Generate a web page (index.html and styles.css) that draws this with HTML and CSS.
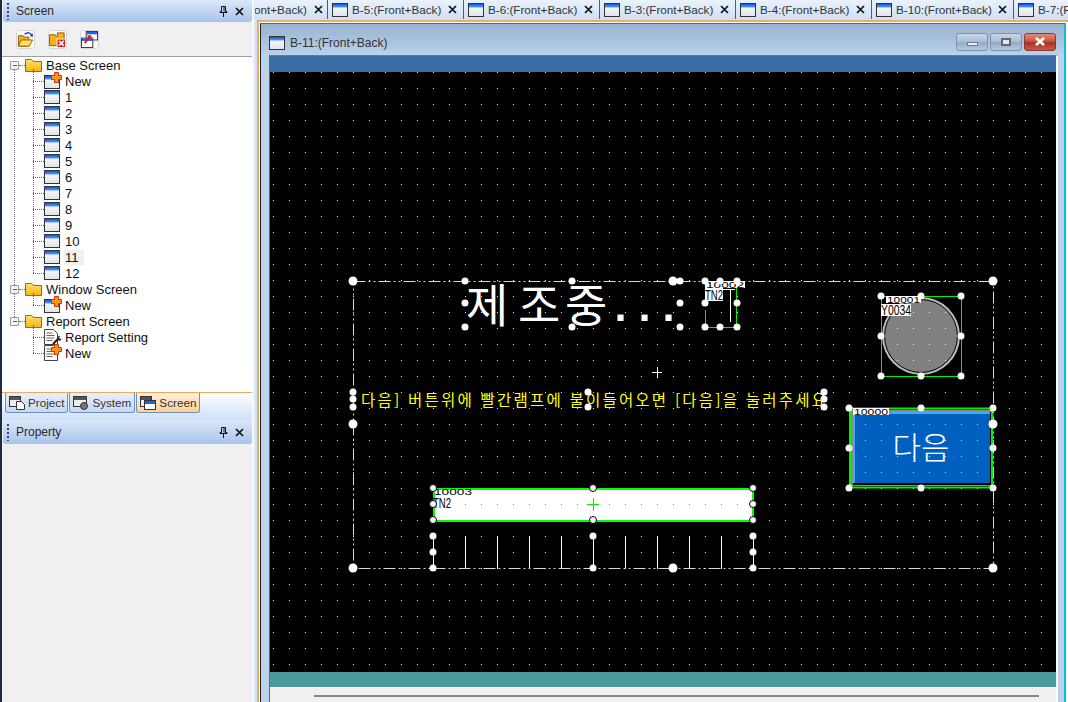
FILE: index.html
```html
<!DOCTYPE html>
<html lang="ko">
<head>
<meta charset="utf-8">
<title>B-11:(Front+Back)</title>
<link rel="stylesheet" href="styles.css">
</head>
<body>
<svg class="defs" width="0" height="0">
  <defs>
    <linearGradient id="gWinTop" x1="0" y1="0" x2="0" y2="1"><stop offset="0" stop-color="#0a5ae0"/><stop offset="1" stop-color="#5aa0f8"/></linearGradient>
    <linearGradient id="gWinBody" x1="0" y1="0" x2="0" y2="1"><stop offset="0" stop-color="#ffffff"/><stop offset="1" stop-color="#dfe3ea"/></linearGradient>
    <linearGradient id="gFolder" x1="0" y1="0" x2="0" y2="1"><stop offset="0" stop-color="#ffe070"/><stop offset="1" stop-color="#f7b40f"/></linearGradient>
    <symbol id="win" viewBox="0 0 16 14">
      <rect x=".5" y=".5" width="15" height="13" fill="url(#gWinBody)" stroke="#333"/>
      <rect x="1" y="1" width="14" height="3.5" fill="url(#gWinTop)"/>
    </symbol>
    <symbol id="folder" viewBox="0 0 17 14">
      <path d="M.5 13.5V1.5h6l2 2h8v10z" fill="url(#gFolder)" stroke="#9a6a08"/>
    </symbol>
    <symbol id="plus" viewBox="0 0 11 11">
      <path d="M3.5.5h4v3h3v4h-3v3h-4v-3h-3v-4h3z" fill="#f7931e" stroke="#c43c00"/>
    </symbol>
    <symbol id="doc" viewBox="0 0 14 16">
      <path d="M.5.5h9l4 4v11H.5z" fill="#fff" stroke="#444"/>
      <path d="M2.5 4h6M2.5 6.500h8M2.500 9h8M2.500 11.500h6" stroke="#666" fill="none"/>
    </symbol>
  </defs>
</svg>

<aside class="sidebar">
  <header class="panel-head">
    <span class="grip"></span>
    <span class="panel-title">Screen</span>
    <svg class="pin" viewBox="0 0 9 11"><path d="M2.500.5h4v5h1.500v1H1v-1h1.500zM4.500 7v4" fill="none" stroke="#111"/><path d="M5 1v4.500" stroke="#111"/></svg>
    <svg class="close" viewBox="0 0 9 9"><path d="M1 1l7 7M8 1L1 8" stroke="#111" stroke-width="1.700" fill="none"/></svg>
  </header>

  <div class="toolbar">
    <button class="tool">
      <svg viewBox="0 0 18 18"><path d="M1.500 16V5h5l1 1.500h5V16z" fill="#f2b01e" stroke="#8a5c00"/><path d="M1.500 16l3-6.500h12L13 16z" fill="#ffdf60" stroke="#8a5c00"/><path d="M8 3.500c3-2.500 6-2 7.500 1" fill="none" stroke="#1d3fb8" stroke-width="1.500"/><path d="M13.500 5.500l3.500.5-.5-3.500z" fill="#1d3fb8"/></svg>
    </button>
    <button class="tool">
      <svg viewBox="0 0 18 18"><path d="M.5 15.500V4h6l1 1.500h1.500V2h7v13.500z" fill="#f2b01e" stroke="#8a5c00"/><rect x="8.500" y="8.500" width="9" height="9" fill="#e01818" stroke="#fff"/><path d="M10.500 10.500l5 5M15.500 10.500l-5 5" stroke="#fff" stroke-width="1.800"/></svg>
    </button>
    <button class="tool">
      <svg viewBox="0 0 18 18"><rect x="5.500" y=".5" width="12" height="9" fill="#fff" stroke="#333"/><rect x="6" y="1" width="11" height="2.500" fill="#1a66e0"/><rect x=".5" y="7.500" width="12" height="10" fill="#fff" stroke="#333"/><rect x="1" y="8" width="11" height="2.500" fill="#1a66e0"/><path d="M4 13l5-7" stroke="#e01818" stroke-width="2"/><path d="M6 4.500h5v4.500z" fill="#e01818"/></svg>
    </button>
  </div>

  <nav class="tree">
    <div class="branch root-a">
      <div class="row root"><span class="box"></span><span class="dots short"></span><svg class="ico-folder"><use href="#folder"/></svg><span>Base Screen</span></div>
      <div class="kids">
        <div class="row"><span class="dots"></span><span class="stack"><svg class="ico"><use href="#win"/></svg><svg class="ico-plus"><use href="#plus"/></svg></span><span>New</span></div>
        <div class="row"><span class="dots"></span><svg class="ico"><use href="#win"/></svg><span>1</span></div>
        <div class="row"><span class="dots"></span><svg class="ico"><use href="#win"/></svg><span>2</span></div>
        <div class="row"><span class="dots"></span><svg class="ico"><use href="#win"/></svg><span>3</span></div>
        <div class="row"><span class="dots"></span><svg class="ico"><use href="#win"/></svg><span>4</span></div>
        <div class="row"><span class="dots"></span><svg class="ico"><use href="#win"/></svg><span>5</span></div>
        <div class="row"><span class="dots"></span><svg class="ico"><use href="#win"/></svg><span>6</span></div>
        <div class="row"><span class="dots"></span><svg class="ico"><use href="#win"/></svg><span>7</span></div>
        <div class="row"><span class="dots"></span><svg class="ico"><use href="#win"/></svg><span>8</span></div>
        <div class="row"><span class="dots"></span><svg class="ico"><use href="#win"/></svg><span>9</span></div>
        <div class="row"><span class="dots"></span><svg class="ico"><use href="#win"/></svg><span>10</span></div>
        <div class="row"><span class="dots"></span><svg class="ico"><use href="#win"/></svg><span class="hover">11</span></div>
        <div class="row"><span class="dots"></span><svg class="ico"><use href="#win"/></svg><span>12</span></div>
      </div>
    </div>
    <div class="branch root-a">
      <div class="row root"><span class="box"></span><span class="dots short"></span><svg class="ico-folder"><use href="#folder"/></svg><span>Window Screen</span></div>
      <div class="kids">
        <div class="row"><span class="dots"></span><span class="stack"><svg class="ico"><use href="#win"/></svg><svg class="ico-plus"><use href="#plus"/></svg></span><span>New</span></div>
      </div>
    </div>
    <div class="branch">
      <div class="row root"><span class="box"></span><span class="dots short"></span><svg class="ico-folder"><use href="#folder"/></svg><span>Report Screen</span></div>
      <div class="kids">
        <div class="row"><span class="dots"></span><span class="stack"><svg class="ico-doc"><use href="#doc"/></svg><svg class="ico-wrench" viewBox="0 0 10 10"><path d="M1 9l5-5" stroke="#222" stroke-width="2.200"/><path d="M5.500 4.500c-1-2 .5-3.500 3-3.500L7 2.500 8 4l1.500-.5c0 2-2 3.200-4 1z" fill="#222"/></svg></span><span>Report Setting</span></div>
        <div class="row"><span class="dots"></span><span class="stack"><svg class="ico-doc"><use href="#doc"/></svg><svg class="ico-plus"><use href="#plus"/></svg></span><span>New</span></div>
      </div>
    </div>
  </nav>

  <div class="side-tabs">
    <span class="side-tab"><svg class="tab-ico" viewBox="0 0 16 14"><rect x=".5" y=".5" width="11" height="10" fill="#eee" stroke="#333"/><rect x="1" y="1" width="10" height="3" fill="#555"/><path d="M7.500 5.500h5l3 3v5h-8z" fill="#fff" stroke="#333"/></svg>Project</span>
    <span class="side-tab"><svg class="tab-ico" viewBox="0 0 16 14"><rect x=".5" y=".5" width="13" height="10" fill="#eee" stroke="#333"/><rect x="1" y="1" width="12" height="3" fill="#555"/><circle cx="11" cy="10" r="3.500" fill="#777" stroke="#333"/></svg>System</span>
    <span class="side-tab active"><svg class="tab-ico" viewBox="0 0 16 14"><rect x=".5" y=".5" width="11" height="10" fill="#eee" stroke="#333"/><rect x="1" y="1" width="10" height="3" fill="#555"/><rect x="4.500" y="4.500" width="11" height="9" fill="#fff" stroke="#333"/><rect x="5" y="5" width="10" height="3" fill="#1a66e0"/></svg>Screen</span>
  </div>

  <header class="panel-head property">
    <span class="grip"></span>
    <span class="panel-title">Property</span>
    <svg class="pin" viewBox="0 0 9 11"><path d="M2.500.5h4v5h1.500v1H1v-1h1.500zM4.500 7v4" fill="none" stroke="#111"/><path d="M5 1v4.500" stroke="#111"/></svg>
    <svg class="close" viewBox="0 0 9 9"><path d="M1 1l7 7M8 1L1 8" stroke="#111" stroke-width="1.700" fill="none"/></svg>
  </header>
  <div class="property-body"></div>
</aside>

<main class="main">
  <div class="tabstrip">
    <div class="tab clipped"><span class="tab-label">ont+Back)</span><svg class="tab-x" viewBox="0 0 9 9"><path d="M1 1l7 7M8 1L1 8" stroke="#111" stroke-width="1.700"/></svg></div>
    <div class="tab"><svg class="ico"><use href="#win"/></svg><span class="tab-label">B-5:(Front+Back)</span><svg class="tab-x" viewBox="0 0 9 9"><path d="M1 1l7 7M8 1L1 8" stroke="#111" stroke-width="1.700"/></svg></div>
    <div class="tab"><svg class="ico"><use href="#win"/></svg><span class="tab-label">B-6:(Front+Back)</span><svg class="tab-x" viewBox="0 0 9 9"><path d="M1 1l7 7M8 1L1 8" stroke="#111" stroke-width="1.700"/></svg></div>
    <div class="tab"><svg class="ico"><use href="#win"/></svg><span class="tab-label">B-3:(Front+Back)</span><svg class="tab-x" viewBox="0 0 9 9"><path d="M1 1l7 7M8 1L1 8" stroke="#111" stroke-width="1.700"/></svg></div>
    <div class="tab"><svg class="ico"><use href="#win"/></svg><span class="tab-label">B-4:(Front+Back)</span><svg class="tab-x" viewBox="0 0 9 9"><path d="M1 1l7 7M8 1L1 8" stroke="#111" stroke-width="1.700"/></svg></div>
    <div class="tab wide"><svg class="ico"><use href="#win"/></svg><span class="tab-label">B-10:(Front+Back)</span><svg class="tab-x" viewBox="0 0 9 9"><path d="M1 1l7 7M8 1L1 8" stroke="#111" stroke-width="1.700"/></svg></div>
    <div class="tab"><svg class="ico"><use href="#win"/></svg><span class="tab-label">B-7:(Front+Back)</span></div>
  </div>

  <div class="workspace">
    <section class="window">
      <div class="titlebar">
        <svg class="ico"><use href="#win"/></svg>
        <span class="win-title">B-11:(Front+Back)</span>
        <div class="win-buttons">
          <span class="win-btn"><i class="glyph-min"></i></span>
          <span class="win-btn"><i class="glyph-max"></i></span>
          <span class="win-btn red"><svg viewBox="0 0 12 9"><path d="M2 1l8 7M10 1L2 8" stroke="#fff" stroke-width="2.600"/></svg></span>
        </div>
      </div>
      <div class="document">
        <div class="screen-top"></div>
        <svg class="canvas" viewBox="270 72 786 600" width="786" height="600">
          <defs>
            <pattern id="gridW" patternUnits="userSpaceOnUse" x="1" y="8" width="16" height="16"><rect width="1" height="1" fill="#e8e8e8"/></pattern>
            <pattern id="gridG" patternUnits="userSpaceOnUse" x="1" y="8" width="16" height="16"><rect width="1" height="1" fill="#999"/></pattern>
            <clipPath id="lampClip"><circle cx="921" cy="336" r="36"/></clipPath>
          </defs>
          <rect x="270" y="72" width="786" height="600" fill="#000"/>
          <rect x="270" y="71" width="786" height="601" fill="url(#gridW)"/>

          <!-- frame -->
          <rect class="dash" x="353.500" y="281.500" width="640" height="287"/>

          <!-- title -->
          <text class="title-ko" y="322"><tspan x="466 518 565">제조중</tspan><tspan class="title-dots" x="614 638 662" y="321">...</tspan></text>

          <!-- small numeric display -->
          <path class="green thin" d="M736.500 288V327.500H705.500V310"/>
          <rect class="label-bg" x="705" y="281" width="40" height="7"/>
          <text class="tiny" x="706" y="288" textLength="38" lengthAdjust="spacingAndGlyphs">10002</text>
          <rect class="label-bg" x="705" y="288" width="18" height="13"/>
          <text class="tall" x="705" y="300" textLength="18" lengthAdjust="spacingAndGlyphs">TN2</text>
          <path class="white-line" d="M722 289.500H735M730.500 289V322"/>

          <!-- lamp -->
          <rect class="green thin" x="881.500" y="296.500" width="80" height="80"/>
          <circle cx="921" cy="336" r="39" fill="#bbb"/>
          <circle cx="921" cy="336" r="36.500" fill="#808080" stroke="#000"/>
          <rect x="885" y="300" width="72" height="72" fill="url(#gridW)" clip-path="url(#lampClip)"/>
          <rect class="label-bg" x="886" y="296" width="35" height="7"/>
          <text class="tiny" x="887" y="303" textLength="33" lengthAdjust="spacingAndGlyphs">10001</text>
          <rect class="label-bg" x="881" y="304" width="30" height="12"/>
          <text class="tall" x="881" y="315" textLength="30" lengthAdjust="spacingAndGlyphs">Y0034</text>

          <!-- yellow message -->
          <text class="message" x="361" y="406" textLength="465" lengthAdjust="spacing">다음] 버튼위에 빨간램프에 불이들어오면 [다음]을 눌러주세요</text>

          <!-- next button -->
          <rect class="green" x="850" y="408.500" width="142" height="79"/>
          <rect x="851" y="410" width="140" height="76" fill="#8a8a8a"/>
          <rect x="853" y="412" width="138" height="73" fill="#000"/>
          <rect x="853" y="412" width="137" height="71" fill="#46a8f0"/>
          <rect x="855" y="414" width="135" height="69" fill="#0060c0"/>
          <rect x="855" y="414" width="135" height="69" fill="url(#gridW)"/>
          <text class="btn-ko" x="921" y="459">다음</text>
          <rect class="label-bg" x="853" y="408" width="36" height="7"/>
          <text class="tiny" x="854" y="415" textLength="34" lengthAdjust="spacingAndGlyphs">10000</text>

          <!-- slider bar -->
          <rect x="434" y="489" width="319" height="32" fill="#fff" stroke="#0f0" stroke-width="2"/>
          <rect x="435" y="490" width="317" height="30" fill="url(#gridG)"/>
          <text class="tiny" x="434" y="495" textLength="38" lengthAdjust="spacingAndGlyphs">10003</text>
          <text class="tall" x="433" y="508" textLength="18" lengthAdjust="spacingAndGlyphs">TN2</text>
          <path class="green thin" d="M587 504.500H599M593.500 498V511"/>

          <!-- scale -->
          <path class="white-line" d="M433.500 536V568M465.500 536V568M497.500 536V568M529.500 536V568M561.500 536V568M593.500 536V568M625.500 536V568M657.500 536V568M689.500 536V568M721.500 536V568M753.500 536V568"/>

          <!-- crosshair -->
          <path class="white-line" d="M652 372.500H662M657.500 367V378"/>

          <!-- handles -->
          <g class="handles">
            <circle cx="465" cy="281" r="3.500"/><circle cx="572" cy="281" r="3.500"/><circle cx="680" cy="281" r="3.500"/>
            <circle cx="465" cy="303" r="3.500"/><circle cx="680" cy="303" r="3.500"/>
            <circle cx="465" cy="327" r="3.500"/><circle cx="572" cy="327" r="3.500"/><circle cx="680" cy="327" r="3.500"/>
            <circle cx="705" cy="281" r="3.500"/><circle cx="720" cy="281" r="3.500"/><circle cx="737" cy="281" r="3.500"/>
            <circle cx="705" cy="303" r="3.500"/><circle cx="737" cy="303" r="3.500"/>
            <circle cx="705" cy="327" r="3.500"/><circle cx="720" cy="327" r="3.500"/><circle cx="737" cy="327" r="3.500"/>
            <circle cx="881" cy="296" r="3.500"/><circle cx="921" cy="296" r="3.500"/><circle cx="961" cy="296" r="3.500"/>
            <circle cx="881" cy="336" r="3.500"/><circle cx="961" cy="336" r="3.500"/>
            <circle cx="881" cy="376" r="3.500"/><circle cx="921" cy="376" r="3.500"/><circle cx="961" cy="376" r="3.500"/>
            <circle cx="353" cy="392" r="3.500"/><circle cx="353" cy="399" r="3.500"/><circle cx="353" cy="407" r="3.500"/>
            <circle cx="588" cy="392" r="3.500"/><circle cx="588" cy="407" r="3.500"/>
            <circle cx="824" cy="392" r="3.500"/><circle cx="824" cy="399" r="3.500"/><circle cx="824" cy="407" r="3.500"/>
            <circle cx="849" cy="408" r="3.500"/><circle cx="921" cy="408" r="3.500"/><circle cx="993" cy="408" r="3.500"/>
            <circle cx="849" cy="448" r="3.500"/><circle cx="993" cy="448" r="3.500"/>
            <circle cx="849" cy="488" r="3.500"/><circle cx="921" cy="488" r="3.500"/><circle cx="993" cy="488" r="3.500"/>
            <circle cx="433" cy="536" r="3.500"/><circle cx="593" cy="536" r="3.500"/><circle cx="753" cy="536" r="3.500"/>
            <circle cx="433" cy="552" r="3.500"/><circle cx="753" cy="552" r="3.500"/>
            <circle cx="433" cy="568" r="3.500"/><circle cx="593" cy="568" r="3.500"/><circle cx="753" cy="568" r="3.500"/>
          </g>
          <g class="handles ringed">
            <circle cx="433" cy="488" r="3.500"/><circle cx="593" cy="488" r="3.500"/><circle cx="753" cy="488" r="3.500"/>
            <circle cx="433" cy="504" r="3.500"/><circle cx="753" cy="504" r="3.500"/>
            <circle cx="433" cy="520" r="3.500"/><circle cx="593" cy="520" r="3.500"/><circle cx="753" cy="520" r="3.500"/>
          </g>
          <g class="handles">
            <circle cx="353" cy="281" r="4.500"/><circle cx="673" cy="281" r="4.500"/><circle cx="993" cy="281" r="4.500"/>
            <circle cx="353" cy="424" r="4.500"/><circle cx="993" cy="424" r="4.500"/>
            <circle cx="353" cy="568" r="4.500"/><circle cx="673" cy="568" r="4.500"/><circle cx="993" cy="568" r="4.500"/>
          </g>
        </svg>
        <div class="screen-bottom"></div>
        <div class="hscroll"><span class="hscroll-thumb"></span></div>
      </div>
    </section>
  </div>
</main>
</body>
</html>
```

FILE: styles.css
```css
* { box-sizing: border-box; }
html, body { margin: 0; padding: 0; }
body {
  width: 1068px;
  height: 702px;
  overflow: hidden;
  display: flex;
  background: #f0f0f0;
  font-family: "Liberation Sans", Arial, sans-serif;
  color: #222;
}
.defs { position: absolute; }

/* sidebar */
.sidebar {
  width: 252px;
  flex: none;
  display: flex;
  flex-direction: column;
  background: #f0f0f0;
  border-left: 2px solid #1c2a44;
}
.panel-head {
  height: 22px;
  flex: none;
  display: flex;
  align-items: center;
  margin: 0 0 0 1px;
  padding: 0 8px 0 4px;
  border-radius: 0 0 3px 3px;
  background: linear-gradient(#dbe8f9, #a8c4ec);
  font-size: 12px;
}
.grip {
  width: 2px;
  height: 17px;
  margin-right: 7px;
  background: repeating-linear-gradient(#26449a 0 2px, transparent 2px 4px);
}
.panel-title { flex: 1; color: #2a2a2a; }
.pin { width: 9px; height: 11px; margin-right: 7px; }
.close { width: 9px; height: 9px; }

.toolbar {
  height: 34px;
  flex: none;
  display: flex;
  align-items: center;
  gap: 13px;
  padding-left: 14px;
  background: #f0f0f0;
}
.tool {
  width: 19px;
  height: 19px;
  padding: 0;
  border: 1px solid #d6d6d6;
  border-radius: 3px;
  background: #fafafa;
  display: flex;
  align-items: center;
  justify-content: center;
}
.tool svg { width: 17px; height: 17px; }

.tree {
  height: 336px;
  flex: none;
  background: #fff;
  border-top: 1px solid #a0a0a0;
  padding-top: 0;
  font-size: 13px;
  color: #111;
}
.branch { position: relative; }
.branch.root-a::before {
  content: "";
  position: absolute;
  left: 12px;
  top: 12px;
  bottom: -8px;
  border-left: 1px dotted #666;
}
.row {
  height: 16px;
  display: flex;
  align-items: center;
  white-space: nowrap;
  position: relative;
}
.root { padding-left: 8px; }
.kids { margin-left: 31px; position: relative; }
.kids::before {
  content: "";
  position: absolute;
  left: 0;
  top: -4px;
  bottom: 8px;
  border-left: 1px dotted #666;
}
.box {
  width: 9px;
  height: 9px;
  flex: none;
  border: 1px solid #999;
  border-radius: 1px;
  background: linear-gradient(90deg, transparent 2px, #3a5fb0 2px, #3a5fb0 6px, transparent 6px) center / 100% 1px no-repeat, #f4f4f4;
  position: relative;
  z-index: 1;
}
.dots { width: 11px; height: 0; flex: none; border-top: 1px dotted #666; }
.dots.short { width: 6px; }
.ico { width: 16px; height: 14px; flex: none; margin-right: 5px; }
.ico-folder { width: 17px; height: 14px; flex: none; margin-right: 4px; }
.stack { width: 16px; height: 16px; flex: none; margin-right: 5px; position: relative; display: block; }
.stack .ico { position: absolute; left: 0; top: 2px; margin: 0; }
.ico-plus { position: absolute; right: -2px; top: -1px; width: 11px; height: 11px; }
.ico-doc { position: absolute; left: 0; top: 0; width: 14px; height: 16px; }
.ico-wrench { position: absolute; right: -2px; bottom: 0; width: 10px; height: 10px; }
.hover { background: #f0f0f0; padding: 0 5px 0 0; margin-right: -5px; box-shadow: -1px 0 0 #f0f0f0; }

.side-tabs {
  height: 28px;
  flex: none;
  display: flex;
  align-items: flex-start;
  gap: 1px;
  padding-left: 3px;
  border-top: 1px solid #f0a860;
  background: linear-gradient(#ffffff 0, #cfe0f7 100%);
  font-size: 11.7px;
}
.side-tab {
  height: 20px;
  display: flex;
  align-items: center;
  gap: 3px;
  padding: 0 3px 0 3px;
  border: 1px solid #6d8fc4;
  border-top: 0;
  border-radius: 0 0 3px 3px;
  background: linear-gradient(#e8f0fb, #c6d9f3);
  color: #333;
}
.side-tab.active { background: linear-gradient(#fff0dc, #ffcf94); }
.tab-ico { width: 16px; height: 14px; flex: none; }
.panel-head.property { height: 24px; margin-top: 0; }
.property-body { flex: 1; background: #f0f0f0; }

/* main */
.main {
  flex: 1;
  min-width: 0;
  display: flex;
  flex-direction: column;
  background: linear-gradient(90deg, #fff 0, #cfe0f5 4px);
}
.tabstrip {
  height: 20px;
  flex: none;
  display: flex;
  overflow: hidden;
  padding-left: 3px;
  font-size: 11.7px;
  color: #333;
}
.tab {
  width: 136px;
  flex: none;
  height: 19px;
  display: flex;
  align-items: center;
  padding-left: 4px;
  border-right: 1px solid #1f62c8;
  background: linear-gradient(#eaf2fc, #cfe0f5);
  position: relative;
}
.tab .ico { margin-right: 4px; }
.tab.wide { width: 142px; }
.tab.clipped { width: 73px; padding-left: 0; justify-content: flex-end; overflow: hidden; }
.tab.clipped .tab-x { margin: 0 4px 0 7px; }
.tab-label { white-space: nowrap; flex: none; }
.tab-x { width: 9px; height: 9px; flex: none; margin-left: auto; margin-right: 6px; }

.workspace {
  flex: 1;
  min-height: 0;
  margin-left: 5px;
  border-top: 2px solid #f2ac66;
  border-left: 2px solid #f2ac66;
  background: #fff;
  padding-top: 1px;
}
.window {
  height: 100%;
  margin-left: 1px;
  margin-right: 2px;
  display: flex;
  flex-direction: column;
  border-top: 1px solid #666;
  border-left: 1px solid #222;
  border-right: 2px solid #12b6e8;
  background: #bcd3ea;
}
.titlebar {
  height: 31px;
  flex: none;
  display: flex;
  align-items: center;
  padding: 6px 0 0 8px;
  background: linear-gradient(#98b3cf, #b9d1ea);
}
.win-title { flex: 1; font-size: 12px; color: #333; }
.win-buttons { display: flex; gap: 2px; margin-right: 8px; margin-top: -2px; }
.win-btn {
  width: 32px;
  height: 18px;
  display: flex;
  align-items: center;
  justify-content: center;
  border: 1px solid #7d93ad;
  border-radius: 3px;
  background: linear-gradient(#c8d6e6 0, #a7bdd6 50%, #90aac6 51%, #b4c9df 100%);
}
.win-btn.red {
  border-color: #8a3a30;
  background: linear-gradient(#e08a7c 0, #c8503f 50%, #a8301f 51%, #c85a48 100%);
}
.win-btn.red svg { width: 12px; height: 9px; }
.glyph-min { width: 11px; height: 4px; display: block; margin-top: 4px; background: #eef2f7; border: 1px solid #778; }
.glyph-max { width: 10px; height: 8px; display: block; border: 2px solid #667; background: #dfe7f0; }
.document {
  flex: 1;
  min-height: 0;
  margin-left: 8px;
  margin-right: 6px;
  border-left: 1px solid #666;
  border-top: 1px solid #777;
  border-right: 2px solid #fff;
  overflow: hidden;
  background: #f0f0f0;
}
.screen-top { height: 16px; background: #3a6ea5; }
.canvas { display: block; }
.screen-bottom { height: 15px; background: #4a9a9e; border-bottom: 0; }
.hscroll {
  height: 15px;
  padding: 7px 17px 0 44px;
  border-top: 1px solid #fff;
  background: #f0f0f0;
}
.hscroll-thumb { display: block; height: 2px; background: #888; }

/* canvas drawing */
.dash { fill: none; stroke: #d8d8d8; stroke-width: 1; stroke-dasharray: 12 3 2 3 2 3; }
.title-ko { font-family: "Noto Sans CJK KR", sans-serif; font-size: 46px; font-weight: 400; fill: #fff; }
.title-dots { font-family: "DejaVu Sans", sans-serif; font-size: 34px; font-weight: 700; }
.btn-ko { font-family: "Noto Sans CJK KR", sans-serif; font-size: 31px; font-weight: 300; fill: #fff; text-anchor: middle; }
.message { font-family: "Noto Sans CJK KR", sans-serif; font-size: 15.500px; fill: #ffff00; }
.tiny { font-family: "Liberation Sans", sans-serif; font-size: 9.500px; fill: #000; }
.tall { font-family: "Liberation Sans", sans-serif; font-size: 14px; fill: #000; }
.label-bg { fill: #fff; }
.green { fill: none; stroke: #00f000; stroke-width: 2; }
.green.thin { stroke-width: 1; }
.white-line { fill: none; stroke: #fff; stroke-width: 1; }
.handles circle { fill: #fff; }
.handles.ringed circle { stroke: #000; stroke-width: 1; }
```
